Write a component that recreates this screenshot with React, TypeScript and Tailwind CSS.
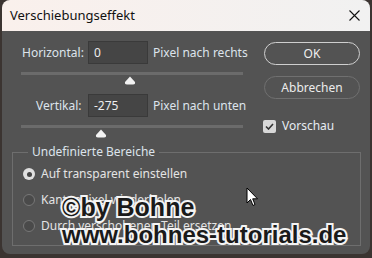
import React from 'react';

const font = { fontFamily: '"Noto Sans", "Open Sans", sans-serif' };

const Slider = ({ thumb }: { thumb: number }) => (
  <div className="relative ml-[19px] w-[222px] h-[12px]">
    <div className="absolute left-0 right-0 top-0 h-[3px] bg-[#6b6b6b]" />
    <svg className="absolute top-[4px]" style={{ left: thumb - 6 }} width="12" height="9" viewBox="0 0 12 9">
      <path d="M6 0.5 L11 6 Q11.5 8.5 9 8.5 L3 8.5 Q0.5 8.5 1 6 Z" fill="#f2f2f2" />
    </svg>
  </div>
);

const Radio = ({ checked, label }: { checked?: boolean; label: string }) => (
  <div className="flex items-center gap-[6px] h-[26px]">
    {checked ? (
      <div className="w-[12px] h-[12px] rounded-full bg-[#e0e0e0] flex items-center justify-center">
        <div className="w-[5px] h-[5px] rounded-full bg-[#444]" />
      </div>
    ) : (
      <div className="w-[12px] h-[12px] rounded-full border border-[#777] bg-[#4a4a4a]" />
    )}
    <span className="text-[12px] text-[#e4e4e4]">{label}</span>
  </div>
);

const mark = {
  fontFamily: '"Liberation Sans", sans-serif',
  WebkitTextStroke: '4px #f4f4f4',
  paintOrder: 'stroke fill',
} as React.CSSProperties;

export default function App() {
  return (
    <div className="w-[372px] h-[258px] bg-[#3b3431] relative overflow-hidden" style={font}>
      <div className="absolute left-[2px] right-[2px] top-0 h-[254px] rounded-[8px] overflow-hidden flex flex-col bg-[#535353]">
        {/* title bar */}
        <div className="h-[31px] bg-gradient-to-r from-[#faf0ec] to-[#f1f1f1] flex items-center justify-between pl-[8px] pr-[10px]">
          <span className="text-[13px] text-[#111]">Verschiebungseffekt</span>
          <svg width="11" height="11" viewBox="0 0 11 11">
            <path d="M0.5 0.5 L10.5 10.5 M10.5 0.5 L0.5 10.5" stroke="#111" strokeWidth="1.1" />
          </svg>
        </div>

        <div className="flex pt-[10px]">
          {/* left column */}
          <div className="w-[250px] flex flex-col">
            <div className="flex items-center h-[23px]">
              <span className="w-[86px] pl-[20px] text-[12px] text-[#dde4ec]">Horizontal:</span>
              <div className="w-[60px] h-[23px] bg-[#454545] border border-[#3a3a3a] text-[12px] text-[#eee] pl-[5px] leading-[21px]">0</div>
              <span className="pl-[5px] text-[12px] text-[#dde4ec]">Pixel nach rechts</span>
            </div>
            <div className="mt-[8px]">
              <Slider thumb={109} />
            </div>
            <div className="flex items-center h-[23px] mt-[10px]">
              <span className="w-[86px] pl-[34px] text-[12px] text-[#dde4ec]">Vertikal:</span>
              <div className="w-[60px] h-[23px] bg-[#454545] border border-[#3a3a3a] text-[12px] text-[#eee] pl-[5px] leading-[21px]">-275</div>
              <span className="pl-[5px] text-[12px] text-[#dde4ec]">Pixel nach unten</span>
            </div>
            <div className="mt-[8px]">
              <Slider thumb={80} />
            </div>
          </div>

          {/* right column */}
          <div className="flex flex-col pl-[12px] pt-[1px]">
            <button className="w-[96px] h-[23px] rounded-full border-[1.5px] border-[#cfcfcf] text-[12px] text-[#f0f0f0]">OK</button>
            <button className="mt-[11px] w-[96px] h-[23px] rounded-full border border-[#707070] text-[12px] text-[#ececec]">Abbrechen</button>
            <div className="flex items-center gap-[6px] mt-[18px] -ml-[1px]">
              <div className="w-[13px] h-[13px] rounded-[2px] bg-[#d8d8d8] flex items-center justify-center">
                <svg width="9" height="7" viewBox="0 0 9 7">
                  <path d="M1 3.5 L3.5 6 L8 1" stroke="#333" strokeWidth="1.6" fill="none" />
                </svg>
              </div>
              <span className="text-[12px] text-[#e6ecf2]">Vorschau</span>
            </div>
          </div>
        </div>

        {/* group box */}
        <div className="relative ml-[10px] mr-[9px] mt-[15px] h-[94px] border border-[#6e6e6e]">
          <span className="absolute -top-[9px] left-[15px] px-[4px] bg-[#535353] text-[12px] leading-[16px] text-[#dde4ec]">Undefinierte Bereiche</span>
          <div className="flex flex-col pl-[10px] pt-[8px]">
            <Radio checked label="Auf transparent einstellen" />
            <Radio label="Kantenpixel wiederholen" />
            <Radio label="Durch verschobenen Teil ersetzen" />
          </div>
        </div>
      </div>

      {/* cursor */}
      <svg className="absolute left-[246px] top-[187px]" width="13" height="20" viewBox="0 0 13 20">
        <path d="M1 1 L1 16 L4.5 12.5 L7 18.5 L9 17.5 L6.7 11.8 L11.5 11.8 Z" fill="#fff" stroke="#000" strokeWidth="1" />
      </svg>

      {/* watermark */}
      <div className="absolute left-[62px] top-[193px] whitespace-nowrap text-[25px] leading-[28px] font-bold text-[#1a1a1a]" style={mark}>
        ©by Bohne
      </div>
      <div className="absolute left-[62px] top-[221px] whitespace-nowrap text-[24px] leading-[28px] font-bold text-[#1a1a1a]" style={mark}>
        www.bohnes-tutorials.de
      </div>
    </div>
  );
}
